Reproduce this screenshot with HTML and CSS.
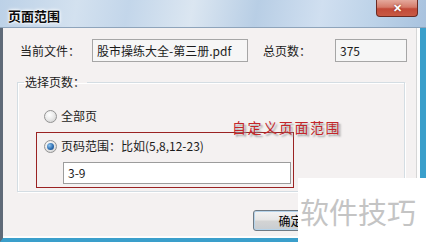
FILE: index.html
```html
<!DOCTYPE html>
<html lang="zh-CN">
<head>
<meta charset="utf-8">
<link rel="stylesheet" href="styles.css">
</head>
<body>
<div class="window">
  <div class="titlebar">
    <span class="title">页面范围</span>
    <span class="close">✕</span>
  </div>
  <div class="client">
    <div class="row">
      <span class="label">当前文件：</span>
      <span class="field file">股市操练大全-第三册.pdf</span>
      <span class="label label2">总页数：</span>
      <span class="field total">375</span>
    </div>
    <fieldset class="group">
      <legend class="legend">选择页数：</legend>
      <div class="option first"><span class="radio"></span><span>全部页</span></div>
      <div class="redbox">
        <div class="option"><span class="radio checked"></span><span>页码范围：比如(5,8,12-23)</span></div>
        <div class="field range">3-9</div>
      </div>
    </fieldset>
    <div class="buttons">
      <span class="btn">确定</span>
    </div>
  </div>
  <div class="note">自定义页面范围</div>
  <div class="watermark">软件技巧</div>
</div>
</body>
</html>
```
FILE: styles.css
```css
html, body {
  margin: 0;
  padding: 0;
  background: #ffffff;
}
body {
  width: 426px;
  height: 242px;
  overflow: hidden;
  font-family: "Noto Sans CJK SC", "Liberation Sans", sans-serif;
  font-size: 12px;
  color: #1b1b1b;
}
.window {
  position: relative;
  width: 426px;
  height: 242px;
  box-sizing: border-box;
  display: flex;
  flex-direction: column;
  background: #f4f1f1;
}
.titlebar {
  height: 28px;
  box-sizing: border-box;
  display: flex;
  justify-content: space-between;
  align-items: flex-start;
  background: linear-gradient(100deg, #bcd1e7 0%, #d3e1ef 18%, #c3d6ea 30%, #dbe6f1 45%, #b8cee5 60%, #d0dff0 75%, #bcd2e8 88%, #a8c2de 100%);
  border-bottom: 1px solid #8ea4bb;
}
.title {
  margin: 7px 0 0 8px;
  font-size: 13px;
  font-weight: bold;
  line-height: 17px;
  color: #0d0d0d;
  text-shadow: 0 0 4px #ffffff, 0 0 3px #ffffff, 0 0 2px #ffffff;
}
.close {
  width: 42px;
  height: 17px;
  margin-right: 8px;
  box-sizing: border-box;
  border: 1px solid #6b2a22;
  border-top: none;
  border-radius: 0 0 4px 4px;
  background: linear-gradient(#e4a99c 0%, #d57b6a 45%, #c24a38 55%, #c85a44 100%);
  color: #ffffff;
  font-size: 11px;
  font-weight: bold;
  line-height: 15px;
  text-align: center;
  text-shadow: 0 0 2px #7a2015;
}
.client {
  flex: 1;
  box-sizing: border-box;
  border-left: 3px solid #5f6a78;
  border-right: 6px solid #3a9fcb;
  border-bottom: 4px solid #3a9fcb;
  box-shadow: inset -3px 0 0 #fdfdfd, inset -4px 0 0 #d6d6d6, inset 0 -2px 0 #fdfdfd;
  display: flex;
  flex-direction: column;
}
.row {
  display: flex;
  align-items: center;
  margin-top: 11px;
  padding-left: 17px;
  height: 23px;
}
.label {
  width: 72px;
}
.label2 {
  margin-left: 15px;
}
.field {
  box-sizing: border-box;
  height: 23px;
  line-height: 21px;
  padding-left: 4px;
  border: 1px solid #a6a6a6;
  background: #f6f6f6;
  white-space: nowrap;
  overflow: hidden;
}
.file {
  width: 156px;
}
.total {
  width: 72px;
}
.group {
  margin: 12px 0 0 14px;
  width: 388px;
  box-sizing: border-box;
  padding: 0 0 3px 0;
  border: 1px solid #d4dde3;
  box-shadow: inset 1px 1px 0 #ffffff, 1px 1px 0 #ffffff;
}
.legend {
  margin-left: 6px;
  padding: 0 2px 0 1px;
  line-height: 16px;
  font-size: 12px;
}
.option {
  display: flex;
  align-items: center;
  height: 16px;
  line-height: 16px;
}
.first {
  margin: 18px 0 0 26px;
}
.radio {
  width: 13px;
  height: 13px;
  box-sizing: border-box;
  border-radius: 50%;
  border: 1px solid #939393;
  background: radial-gradient(circle at 40% 35%, #ffffff 0%, #e9e9e9 50%, #c9c9c9 100%);
  margin-right: 4px;
  position: relative;
}
.radio.checked::after {
  content: "";
  position: absolute;
  left: 2px;
  top: 2px;
  width: 7px;
  height: 7px;
  border-radius: 50%;
  background: radial-gradient(circle at 35% 35%, #8fc4ee 0%, #2f6fb3 55%, #173f74 100%);
}
.redbox {
  margin: 8px 0 0 18px;
  width: 258px;
  box-sizing: border-box;
  border: 1px solid #9a2222;
  padding: 5px 0 3px 7px;
}
.range {
  margin: 8px 0 0 19px;
  width: 228px;
  height: 22px;
  line-height: 20px;
  background: #ffffff;
  border-color: #9c9c9c;
}
.buttons {
  display: flex;
  padding-left: 250px;
  margin-top: 18px;
}
.btn {
  width: 75px;
  height: 21px;
  box-sizing: border-box;
  border: 1px solid #6f7a84;
  border-radius: 3px;
  background: linear-gradient(#f4f4f4 0%, #e6e6e6 48%, #d4d4d4 52%, #c8cdd2 100%);
  box-shadow: inset 0 0 0 1px #b5d3ea;
  text-align: center;
  line-height: 19px;
  color: #000000;
}
.note {
  position: absolute;
  left: 232px;
  top: 118px;
  font-size: 14px;
  letter-spacing: 1.6px;
  line-height: 18px;
  color: #c3262a;
  text-shadow: 2px 2px 2px #9a9a9a;
}
.watermark {
  position: absolute;
  left: 298px;
  top: 178px;
  width: 128px;
  height: 64px;
  background: #ffffff;
  color: #c4c4c4;
  font-size: 29px;
  line-height: 40px;
  padding-top: 13px;
  box-sizing: border-box;
  padding-left: 2px;
  letter-spacing: 0;
  white-space: nowrap;
}
```
